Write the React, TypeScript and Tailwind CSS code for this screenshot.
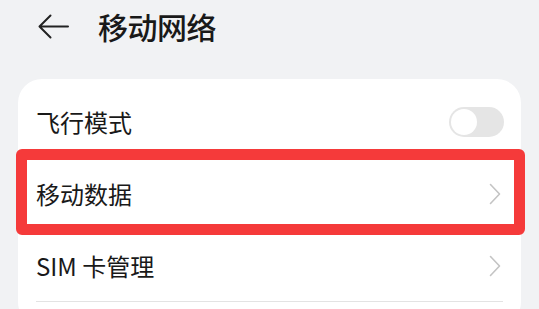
import React from "react";

function Chevron() {
  return (
    <svg width="12" height="22" viewBox="0 0 12 22" fill="none">
      <path d="M1.5 1.5 L10.5 11 L1.5 20.5" stroke="#c4c4c4" strokeWidth="1.6" strokeLinecap="round" strokeLinejoin="round" />
    </svg>
  );
}

export default function App() {
  return (
    <div
      className="w-[539px] h-[309px] overflow-hidden bg-[#f1f2f4] text-[#191919]"
      style={{ fontFamily: '"Noto Sans CJK SC", "Noto Sans", sans-serif' }}
    >
      <div className="h-[52px] flex items-center">
        <div className="ml-[38px] w-[31px] flex items-center">
          <svg width="31" height="25" viewBox="0 0 31 25" fill="none">
            <path d="M12.5 1.5 L1.5 12.5 L12.5 23.5 M1.5 12.5 H30" stroke="#222" strokeWidth="2" strokeLinecap="round" strokeLinejoin="round" />
          </svg>
        </div>
        <div className="ml-[29px] text-[30px] font-medium leading-none tracking-[-0.5px]">移动网络</div>
      </div>
      <div className="mt-[27px] mx-[18px] bg-white rounded-[24px] pt-[7px] pb-[24px]">
        <div className="h-[72px] flex items-center justify-between pl-[18px] pr-[17px]">
          <span className="text-[24px] leading-none">飞行模式</span>
          <div className="w-[55px] h-[30px] rounded-full bg-[#e5e5e5] p-[2px] flex items-center">
            <div className="w-[26px] h-[26px] rounded-full bg-white" />
          </div>
        </div>
        <div className="relative h-[72px] flex items-center justify-between pl-[18px] pr-[20px]">
          <span className="text-[24px] leading-none">移动数据</span>
          <Chevron />
          <div className="absolute left-[-2px] right-[-4px] top-[-9px] bottom-[-5px] border-[11px] border-[#f53a3a] rounded-[6px] pointer-events-none" />
        </div>
        <div className="h-[72px] flex flex-col pl-[18px] pr-[18px]">
          <div className="flex-1 flex items-center justify-between pr-[2px]">
            <span className="text-[24px] leading-none">SIM 卡管理</span>
            <Chevron />
          </div>
          <div className="h-px bg-[#e3e3e3]" />
        </div>
      </div>
    </div>
  );
}
